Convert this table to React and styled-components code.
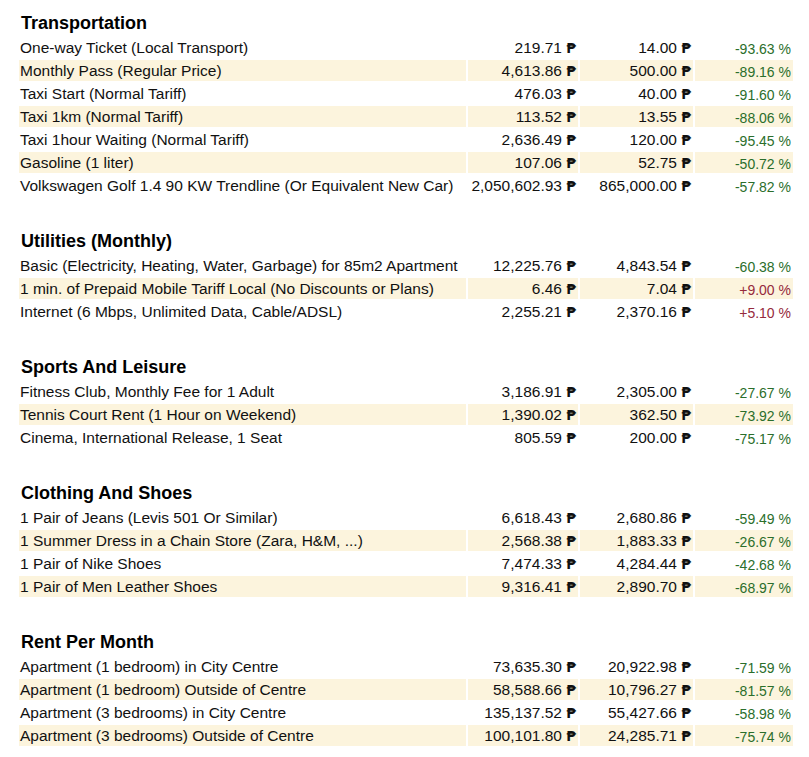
import React from "react";
import styled, { createGlobalStyle } from "styled-components";

const GlobalStyle = createGlobalStyle`
  body {
    margin: 0;
    background: #fff;
    color: #111;
    font-family: "Liberation Sans", Arial, sans-serif;
  }
`;

const Page = styled.div`
  padding: 10px 16px 0 19px;
`;

const PriceTable = styled.div`
  display: flex;
  flex-direction: column;
  gap: 2px;
  width: 774px;
`;

const SectionTitle = styled.div`
  font-size: 18px;
  font-weight: bold;
  line-height: 22px;
  color: #000;
  padding: ${({ $first }) => ($first ? "2px" : "32px")} 0 1px 2px;
`;

const Row = styled.div`
  display: grid;
  grid-template-columns: 447px 110px 113px 98px;
  column-gap: 2px;
  height: 21px;
`;

const Cell = styled.div`
  background: ${({ $shaded }) => ($shaded ? "#fcf4dd" : "transparent")};
  white-space: nowrap;
  overflow: hidden;
`;

const NameCell = styled(Cell)`
  font-size: 15.5px;
  line-height: 21px;
  padding-left: 1px;
`;

const PriceCell = styled(Cell)`
  font-size: 15.5px;
  line-height: 21px;
  text-align: right;
  padding-right: 2px;
`;

const Peso = styled.span`
  font-family: "DejaVu Sans", sans-serif;
  font-size: 14px;
  font-weight: bold;
`;

const ChangeCell = styled(Cell)`
  font-size: 14px;
  line-height: 18px;
  padding-top: 3px;
  text-align: right;
  padding-right: 2px;
  color: ${({ $up }) => ($up ? "#962a3c" : "#2b6e2b")};
`;

const sections = [
  {
    title: "Transportation",
    rows: [
      ["One-way Ticket (Local Transport)", "219.71", "14.00", "-93.63"],
      ["Monthly Pass (Regular Price)", "4,613.86", "500.00", "-89.16"],
      ["Taxi Start (Normal Tariff)", "476.03", "40.00", "-91.60"],
      ["Taxi 1km (Normal Tariff)", "113.52", "13.55", "-88.06"],
      ["Taxi 1hour Waiting (Normal Tariff)", "2,636.49", "120.00", "-95.45"],
      ["Gasoline (1 liter)", "107.06", "52.75", "-50.72"],
      [
        "Volkswagen Golf 1.4 90 KW Trendline (Or Equivalent New Car)",
        "2,050,602.93",
        "865,000.00",
        "-57.82",
      ],
    ],
  },
  {
    title: "Utilities (Monthly)",
    rows: [
      [
        "Basic (Electricity, Heating, Water, Garbage) for 85m2 Apartment",
        "12,225.76",
        "4,843.54",
        "-60.38",
      ],
      [
        "1 min. of Prepaid Mobile Tariff Local (No Discounts or Plans)",
        "6.46",
        "7.04",
        "+9.00",
      ],
      [
        "Internet (6 Mbps, Unlimited Data, Cable/ADSL)",
        "2,255.21",
        "2,370.16",
        "+5.10",
      ],
    ],
  },
  {
    title: "Sports And Leisure",
    rows: [
      ["Fitness Club, Monthly Fee for 1 Adult", "3,186.91", "2,305.00", "-27.67"],
      ["Tennis Court Rent (1 Hour on Weekend)", "1,390.02", "362.50", "-73.92"],
      ["Cinema, International Release, 1 Seat", "805.59", "200.00", "-75.17"],
    ],
  },
  {
    title: "Clothing And Shoes",
    rows: [
      ["1 Pair of Jeans (Levis 501 Or Similar)", "6,618.43", "2,680.86", "-59.49"],
      [
        "1 Summer Dress in a Chain Store (Zara, H&M, ...)",
        "2,568.38",
        "1,883.33",
        "-26.67",
      ],
      ["1 Pair of Nike Shoes", "7,474.33", "4,284.44", "-42.68"],
      ["1 Pair of Men Leather Shoes", "9,316.41", "2,890.70", "-68.97"],
    ],
  },
  {
    title: "Rent Per Month",
    rows: [
      ["Apartment (1 bedroom) in City Centre", "73,635.30", "20,922.98", "-71.59"],
      ["Apartment (1 bedroom) Outside of Centre", "58,588.66", "10,796.27", "-81.57"],
      ["Apartment (3 bedrooms) in City Centre", "135,137.52", "55,427.66", "-58.98"],
      ["Apartment (3 bedrooms) Outside of Centre", "100,101.80", "24,285.71", "-75.74"],
    ],
  },
];

function PriceRow({ item, shaded }) {
  const [name, first, second, change] = item;
  return (
    <Row>
      <NameCell $shaded={shaded}>{name}</NameCell>
      <PriceCell $shaded={shaded}>
        {first}&nbsp;<Peso>₱</Peso>
      </PriceCell>
      <PriceCell $shaded={shaded}>
        {second}&nbsp;<Peso>₱</Peso>
      </PriceCell>
      <ChangeCell $shaded={shaded} $up={change.startsWith("+")}>
        {change}&nbsp;%
      </ChangeCell>
    </Row>
  );
}

export default function App() {
  return (
    <>
      <GlobalStyle />
      <Page>
        <PriceTable>
          {sections.map((section, si) => (
            <React.Fragment key={section.title}>
              <SectionTitle $first={si === 0}>{section.title}</SectionTitle>
              {section.rows.map((item, i) => (
                <PriceRow key={item[0]} item={item} shaded={i % 2 === 1} />
              ))}
            </React.Fragment>
          ))}
        </PriceTable>
      </Page>
    </>
  );
}
